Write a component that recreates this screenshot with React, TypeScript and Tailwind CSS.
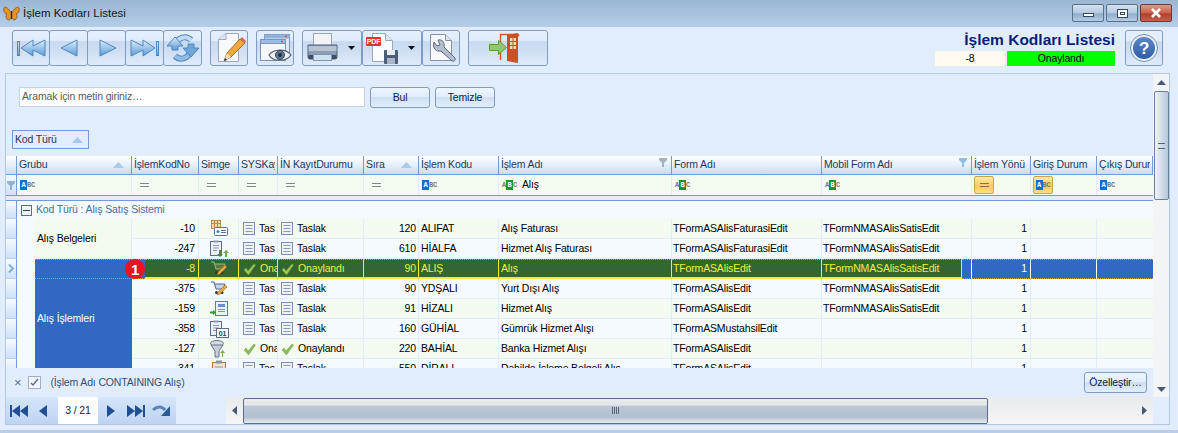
import React from "react";

const COLS = "grid-cols-[11px_18px_97px_67px_40px_39px_86px_55px_80px_173px_150px_150px_59px_66px_56px]";

const toolBtn =
  "relative flex h-[36px] shrink-0 items-center justify-center rounded-[3px] border border-[#7f9cc3] bg-[linear-gradient(180deg,#e4effe_0%,#dfebfc_30%,#c8daf1_31%,#cfdff3_60%,#e0ebfb_100%)]";
const smallBtn =
  "flex h-[21px] items-center justify-center rounded-[3px] border border-[#7f9cc3] bg-[linear-gradient(180deg,#eef5fe_0%,#e2edfc_45%,#cfdff4_50%,#e2edfb_100%)] text-[#10233f]";

const Tri = ({ id }: { id: string }) => (
  <defs>
    <linearGradient id={id} x1="0" y1="0" x2="0" y2="1">
      <stop offset="0" stopColor="#dcedfb" />
      <stop offset="1" stopColor="#5c9ad6" />
    </linearGradient>
  </defs>
);

const NavIcon = ({ kind }: { kind: "first" | "prev" | "next" | "last" }) => {
  const id = "nav-" + kind;
  return (
    <svg width="36" height="34" viewBox="0 0 36 34">
      <Tri id={id} />
      <g fill={`url(#${id})`} stroke="#4f86c0" strokeWidth="1">
        {kind === "first" && (
          <>
            <rect x="4.5" y="10.5" width="2" height="14" />
            <path d="M32 9v16L20 19v6L8 17l12-8v6z" />
          </>
        )}
        {kind === "prev" && <path d="M26 9v16L10 17z" />}
        {kind === "next" && <path d="M11 9v16l16-8z" />}
        {kind === "last" && (
          <>
            <rect x="29.5" y="10.5" width="2" height="14" />
            <path d="M4 9v16l12-6v6l12-8-12-8v6z" />
          </>
        )}
      </g>
    </svg>
  );
};

const RefreshIcon = () => (
  <svg width="36" height="34" viewBox="0 0 36 34">
    <Tri id="rf" />
    <g fill="none" strokeLinecap="butt">
      <path d="M11 13a9 9 0 0 1 15-4" stroke="#4f86bd" strokeWidth="6" />
      <path d="M11 13a9 9 0 0 1 15-4" stroke="#bfdcf3" strokeWidth="4" />
      <path d="M25 21a9 9 0 0 1-15 4" stroke="#4f86bd" strokeWidth="6" />
      <path d="M25 21a9 9 0 0 1-15 4" stroke="#8fbde4" strokeWidth="4" />
    </g>
    <path d="M2 15l8-9 8 9h-5v4H7v-4z" fill="url(#rf)" stroke="#4f86bd" />
    <path d="M34 17l-8 9-8-9h5v-4h6v4z" fill="#6ea6da" stroke="#4f86bd" />
  </svg>
);

const DocPencilIcon = () => (
  <svg width="36" height="34" viewBox="0 0 36 34">
    <path d="M7.5 8.5 15 2.5h12.5v28h-20z" fill="#f7f9fc" stroke="#9aa8ba" />
    <path d="M7.5 8.5h7.5v-6" fill="#dfe6ef" stroke="#9aa8ba" />
    <path d="M13 30l3-8 13-14 5 4-14 14z" fill="#f2a83a" stroke="#7a5a20" strokeWidth=".8" />
    <path d="M13 30l3-8 4 4z" fill="#f0dcb8" />
    <path d="M13 30l1-3 2 2z" fill="#333" />
    <path d="M29 8l5 4 1-2-4-4z" fill="#d9695a" />
  </svg>
);

const ViewIcon = () => (
  <svg width="36" height="34" viewBox="0 0 36 34">
    <rect x="7.5" y="3.5" width="25" height="18" fill="#dfeafa" stroke="#7d93b3" />
    <rect x="7.5" y="3.5" width="25" height="4" fill="#8fb2e0" />
    <rect x="3.5" y="8.5" width="25" height="21" fill="#f4f7fc" stroke="#7d93b3" />
    <rect x="3.5" y="8.5" width="25" height="4" fill="#9cbde6" stroke="#7d93b3" />
    <circle cx="29" cy="5.5" r="1" fill="#d9503f" />
    <circle cx="25" cy="10.5" r="1" fill="#d9503f" />
    <path d="M12 24c4-6 17-7 22 0-5 7-18 7-22 0z" fill="#eef0f2" stroke="#55606e" strokeWidth="1.2" />
    <circle cx="23" cy="24" r="4.5" fill="#5f7894" stroke="#39495c" />
    <circle cx="23" cy="24" r="2" fill="#26303c" />
  </svg>
);

const PrinterIcon = () => (
  <svg width="34" height="34" viewBox="0 0 34 34">
    <rect x="8.5" y="2.5" width="18" height="13" fill="#f2f4f7" stroke="#9aa5b3" />
    <path d="M3 14h29v12a2 2 0 0 1-2 2H5a2 2 0 0 1-2-2z" fill="#8d9db5" stroke="#4d5c74" />
    <rect x="3.5" y="15" width="28" height="5" fill="#b7c2d2" />
    <rect x="3.5" y="24" width="28" height="4" fill="#3f4e66" />
    <rect x="8.5" y="23.5" width="18" height="6" fill="#cfe0f1" stroke="#7f94ad" />
  </svg>
);

const PdfIcon = () => (
  <svg width="34" height="34" viewBox="0 0 34 34">
    <path d="M7.5 2.5h13l7 7v21h-20z" fill="#fbfcfe" stroke="#9aa8ba" />
    <path d="M20.5 2.5v7h7" fill="#dfe6ef" stroke="#9aa8ba" />
    <rect x="1" y="6" width="15" height="9" rx="1" fill="#d9352c" />
    <text x="8.5" y="13.2" textAnchor="middle" fontSize="7" fontWeight="700" fill="#fff" fontFamily="Liberation Sans, sans-serif">PDF</text>
    <rect x="19" y="19" width="14" height="14" rx="1" fill="#4c5d77" />
    <rect x="22" y="19" width="8" height="5" fill="#e6ebf2" />
    <rect x="22" y="27" width="8" height="6" fill="#aab6c6" />
  </svg>
);

const WrenchIcon = () => (
  <svg width="36" height="34" viewBox="0 0 36 34">
    <path d="M7.5 3.5h15l6 6v20h-21z" fill="#f7f9fc" stroke="#8693a6" />
    <path d="M22.5 3.5v6h6" fill="#dfe6ef" stroke="#8693a6" />
    <path d="M11 11l3 4 3-1-2-5c4-1 7 2 6 7l11 11c1 2-1 4-3 3L18 20c-5 1-9-3-7-9z" fill="#b3bfce" stroke="#5d6b7f" />
  </svg>
);

const ExitIcon = () => (
  <svg width="40" height="34" viewBox="0 0 40 34">
    <path d="M12.5 29V3.5h18v2" fill="none" stroke="#d9552c" strokeWidth="1.4" />
    <path d="M19 4l11-2v30l-11-2z" fill="#cf4f24" />
    <g fill="#e9d9b5">
      <rect x="22" y="7" width="2.5" height="3" />
      <rect x="25.5" y="7" width="2.5" height="3" />
      <rect x="22" y="11" width="2.5" height="3" />
      <rect x="25.5" y="11" width="2.5" height="3" />
      <rect x="22" y="15" width="2.5" height="3" />
      <rect x="25.5" y="15" width="2.5" height="3" />
    </g>
    <path d="M1.5 13.5h9v-4l8 7-8 7v-4h-9z" fill="#93c866" stroke="#5f9a3a" />
  </svg>
);

const HelpIcon = () => (
  <svg width="30" height="30" viewBox="0 0 30 30">
    <defs>
      <linearGradient id="hp" x1="0" y1="0" x2="0" y2="1">
        <stop offset="0" stopColor="#5f86c6" />
        <stop offset="1" stopColor="#2c5da8" />
      </linearGradient>
    </defs>
    <circle cx="15" cy="15" r="13.5" fill="#e8eef6" stroke="#7a94b8" />
    <circle cx="15" cy="15" r="11" fill="url(#hp)" />
    <text x="15" y="21" textAnchor="middle" fontSize="17" fontWeight="700" fill="#fff" fontFamily="Liberation Sans, sans-serif">?</text>
  </svg>
);

const Butterfly = () => (
  <svg width="17" height="16" viewBox="0 0 17 16">
    <path d="M8 7C6 2 2 0 1 2c-1 3 1 6 3 6-2 1-1 6 2 6 2 0 2-4 2-7z" fill="#e8902a" stroke="#7c4a14" strokeWidth=".7" />
    <path d="M9 7c2-5 6-7 7-5 1 3-1 6-3 6 2 1 1 6-2 6-2 0-2-4-2-7z" fill="#e8902a" stroke="#7c4a14" strokeWidth=".7" />
    <rect x="8" y="5" width="1" height="8" fill="#3a2a14" />
  </svg>
);

const Caret = () => (
  <svg width="7" height="4" viewBox="0 0 7 4" className="shrink-0">
    <path d="M0 0h7L3.5 4z" fill="#111" />
  </svg>
);

const WinButton = ({ kind }: { kind: "min" | "max" | "close" }) => (
  <div
    className={
      kind === "close"
        ? "flex h-[18px] w-[32px] items-center justify-center rounded-[2px] border border-[#6b3a3a] bg-[linear-gradient(180deg,#dd9a8a_0%,#c9604c_50%,#b33f2c_55%,#c4604a_100%)]"
        : "flex h-[18px] w-[32px] items-center justify-center rounded-[2px] border border-[#5c6f88] bg-[linear-gradient(180deg,#d4e1f0_0%,#b4c9e0_50%,#8fadce_55%,#b4cbe4_100%)]"
    }
  >
    {kind === "min" && <div className="mt-[4px] h-[4px] w-[11px] border border-[#36475e] bg-white" />}
    {kind === "max" && <div className="flex h-[9px] w-[11px] items-center justify-center border border-[#36475e] bg-white"><div className="h-[3px] w-[5px] border border-[#36475e]" /></div>}
    {kind === "close" && (
      <svg width="12" height="10" viewBox="0 0 12 10">
        <path d="M2 1l8 8M10 1L2 9" stroke="#fff" strokeWidth="2.6" />
      </svg>
    )}
  </div>
);

const Sort = () => (
  <svg width="11" height="6" viewBox="0 0 11 6" className="shrink-0">
    <path d="M0 6L5.5 0 11 6z" fill="#a9c8ec" />
  </svg>
);

const Funnel = ({ color = "#a5b4c4" }: { color?: string }) => (
  <svg width="8" height="9" viewBox="0 0 8 9" className="shrink-0">
    <path d="M0 0h8v2L5 5v4H3V5L0 2z" fill={color} />
  </svg>
);

const Eq = () => <div className="ml-[6px] h-[4px] w-[9px] border-y border-[#7f8790]" />;

const Abc = ({ on }: { on: "a" | "b" }) => (
  <span className="flex items-center font-['Liberation_Mono',monospace] text-[7px] font-bold leading-none tracking-normal text-[#777]">
    <span className={on === "a" ? "flex h-[10px] w-[7px] items-center justify-center bg-[#0f6fd1] text-white" : "w-[4px] text-center"}>A</span>
    <span className={on === "b" ? "flex h-[10px] w-[7px] items-center justify-center bg-[#0e9a2a] text-white" : "w-[4px] text-center"}>B</span>
    <span className="w-[4px] text-center">C</span>
  </span>
);

const DocMark = () => (
  <svg width="12" height="13" viewBox="0 0 12 13" className="shrink-0">
    <rect x=".5" y=".5" width="11" height="12" fill="#eef2f9" stroke="#7e8cb2" />
    <path d="M2.5 3.5h7M2.5 6.500h7M2.5 9.500h7" stroke="#8c98bb" />
  </svg>
);

const Check = ({ light }: { light?: boolean }) => (
  <svg width="13" height="12" viewBox="0 0 13 12" className="shrink-0">
    <path d="M1 7l2-2 2 3 6-7 1.500 1-7 10z" fill={light ? "#9ecb50" : "#8dbb58"} stroke={light ? "#6c9a38" : "#7aa24a"} strokeWidth=".5" />
  </svg>
);

const SimgeIcon = ({ n }: { n: number }) => {
  if (n === 0)
    return (
      <svg width="18" height="17" viewBox="0 0 18 17">
        <rect x="1.5" y=".5" width="9" height="8" fill="#f6d9a8" stroke="#c98a3a" />
        <path d="M1.5 3.5h9M4.5.5v8M7.5.5v8" stroke="#c98a3a" />
        <rect x="4.5" y="7.5" width="13" height="8" rx="1" fill="#f6f8fc" stroke="#5b6f96" />
        <circle cx="8" cy="11.5" r="1.5" fill="#5b7fb0" />
        <path d="M11 10.5h5M11 12.5h5" stroke="#5b6f96" />
      </svg>
    );
  if (n === 1 || n === 5)
    return (
      <svg width="20" height="18" viewBox="0 0 20 18">
        <rect x="1.5" y="1.5" width="11" height="14" fill="#eef2f8" stroke="#5c6c8c" />
        <rect x="4.5" y=".5" width="5" height="2" fill="#8c9ab2" />
        <path d="M4 5.5h6M4 8h6M4 10.5h4" stroke="#8895ad" />
        {n === 1 ? (
          <>
            <path d="M10 10v4H8l3 3 3-3h-2v-4z" fill="#4f8a3c" />
            <path d="M16 17v-4h-2l3-3 3 3h-2v4z" fill="#76a94e" />
          </>
        ) : (
          <>
            <rect x="7.5" y="8.5" width="12" height="9" fill="#f6f8fc" stroke="#5c6c8c" />
            <text x="13.5" y="16" textAnchor="middle" fontSize="7" fontWeight="700" fill="#2f3e5c" fontFamily="Liberation Sans, sans-serif">01</text>
          </>
        )}
      </svg>
    );
  if (n === 2 || n === 3)
    return (
      <svg width="17" height="15" viewBox="0 0 17 15">
        <path d="M1 1h3l2 7h7l2-5H5" fill={n === 2 ? "#5a7a3a" : "#c6d4ea"} stroke={n === 2 ? "#9fb27a" : "#52688e"} />
        <circle cx="6.5" cy="11.5" r="1.5" fill="#333" />
        <circle cx="12" cy="11.5" r="1.5" fill="#333" />
        <path d="M7 14l1-3 7-7 2 2-7 7z" fill="#eea73c" stroke="#7a5a20" strokeWidth=".5" />
      </svg>
    );
  if (n === 4)
    return (
      <svg width="18" height="16" viewBox="0 0 18 16">
        <rect x="5.5" y=".5" width="12" height="14" fill="#eaf1fb" stroke="#5c7cae" />
        <rect x="8" y="3" width="7" height="3" fill="#6d8fc2" />
        <path d="M8 8.5h7M8 10.5h7" stroke="#7d95bb" />
        <path d="M0 10.5h3V9l3 2.5L3 14v-1.500H0z" fill="#2f9a2f" />
      </svg>
    );
  if (n === 6)
    return (
      <svg width="19" height="18" viewBox="0 0 19 18">
        <ellipse cx="8" cy="3.5" rx="6.5" ry="3" fill="#d5dae2" stroke="#687487" />
        <path d="M2 5l4 6v6h4v-6l4-6z" fill="#c8ced8" stroke="#687487" />
        <path d="M13 17v-4h-2l2.500-3 2.500 3h-2v4z" fill="#7aae4c" />
      </svg>
    );
  return (
    <svg width="14" height="18" viewBox="0 0 14 18">
      <rect x=".5" y="2.5" width="13" height="15" fill="#f7e3c4" stroke="#c0762a" />
      <rect x="4" y=".5" width="6" height="3" fill="#8895ad" />
      <path d="M3 7h8M3 10h8" stroke="#8895ad" />
    </svg>
  );
};

type Row = {
  no: string;
  ok: boolean;
  sira: string;
  kod: string;
  ad: string;
  form: string;
  mobil: string;
};

const MOBIL = "TFormNMASAlisSatisEdit";
const rows: Row[] = [
  { no: "-10", ok: false, sira: "120", kod: "ALIFAT", ad: "Alış Faturası", form: "TFormASAlisFaturasiEdit", mobil: MOBIL },
  { no: "-247", ok: false, sira: "610", kod: "HİALFA", ad: "Hizmet Alış Faturası", form: "TFormASAlisFaturasiEdit", mobil: MOBIL },
  { no: "-8", ok: true, sira: "90", kod: "ALIŞ", ad: "Alış", form: "TFormASAlisEdit", mobil: MOBIL },
  { no: "-375", ok: false, sira: "90", kod: "YDŞALI", ad: "Yurt Dışı Alış", form: "TFormASAlisEdit", mobil: MOBIL },
  { no: "-159", ok: false, sira: "91", kod: "HİZALI", ad: "Hizmet Alış", form: "TFormASAlisEdit", mobil: MOBIL },
  { no: "-358", ok: false, sira: "160", kod: "GÜHİAL", ad: "Gümrük Hizmet Alışı", form: "TFormASMustahsilEdit", mobil: "" },
  { no: "-127", ok: true, sira: "220", kod: "BAHİAL", ad: "Banka Hizmet Alışı", form: "TFormASAlisEdit", mobil: "" },
  { no: "-341", ok: false, sira: "550", kod: "DİRALI", ad: "Dahilde İşleme Belgeli Alış", form: "TFormASAlisEdit", mobil: "" },
];

const headCell =
  "relative flex items-center gap-1 overflow-hidden whitespace-nowrap border-r border-b border-r-[#6f9bd6] border-b-[#6f9bd6] bg-[linear-gradient(180deg,#ffffff_0%,#e6effc_50%,#c9dcf6_100%)] pl-[2px] pr-[2px] text-[#1e395b]";
const filterCell = "flex items-center overflow-hidden whitespace-nowrap border-r border-r-[#e1edfb] bg-[#f4fbf1] pl-[2px]";
const indicator =
  "flex items-center justify-center border-r border-b border-r-[#6f9bd6] border-b-[#b9cfea] bg-[linear-gradient(180deg,#f6faff_0%,#cfe0f7_100%)]";

const Head = ({ label, sort, funnel }: { label: string; sort?: boolean; funnel?: string }) => (
  <div className={headCell}>
    <span className="flex-1 overflow-hidden">{label}</span>
    {sort && <span className="mr-[4px]"><Sort /></span>}
    {funnel && <span className="mr-[2px] mb-[5px]"><Funnel color={funnel} /></span>}
  </div>
);

const GreenCell = "border-r border-r-[#eded3a] border-t border-t-[#c9a43a] [border-top-style:dotted] border-b-2 border-b-[#eded3a] bg-[#336633] text-[#f0f03c]";
const BlueCell = "border-r border-r-[#ffffff] border-y border-y-[#c9a43a] [border-top-style:dotted] [border-bottom-style:dotted] bg-[#3068c4] text-white";

const DataRow = ({ row, i, group }: { row: Row; i: number; group?: React.ReactNode }) => {
  const sel = i === 2;
  const tint = i === 0 || i === 4 || i === 6 ? "bg-[#f3fbf0]" : "bg-[#f5faff]";
  const base = "flex items-center overflow-hidden whitespace-nowrap";
  const plain = `border-r border-b border-r-[#e1edfb] border-b-[#e1edfb] ${tint}`;
  const cell = `${base} ${sel ? GreenCell : plain}`;
  return (
    <>
      <div className={indicator}>
        {sel && (
          <svg width="6" height="9" viewBox="0 0 6 9">
            <path d="M1 .5l4 4-4 4" fill="none" stroke="#7fa8dc" strokeWidth="1.8" />
          </svg>
        )}
      </div>
      <div className="border-b border-b-[#f5faff] bg-[#f5faff]" />
      {group}
      {sel ? (
        <div className="relative flex">
          <div className={`w-[13px] ${BlueCell} border-r-0`} />
          <div className={`${cell} flex-1 justify-end pr-[3px]`}>{row.no}</div>
          <div className="absolute left-[-7px] top-0 z-10 flex h-[20px] w-[20px] items-center justify-center rounded-full bg-[#ee1122] text-[15px] font-bold leading-none text-white">1</div>
        </div>
      ) : (
        <div className={`${cell} justify-end pr-[3px]`}>{row.no}</div>
      )}
      <div className={`${cell} justify-center`}><SimgeIcon n={i} /></div>
      <div className={`${cell} gap-[4px] pl-[4px]`}>
        {row.ok ? <Check light={sel} /> : <DocMark />}
        <span>{row.ok ? "Ona" : "Tas"}</span>
      </div>
      <div className={`${cell} gap-[4px] pl-[3px]`}>
        {row.ok ? <Check light={sel} /> : <DocMark />}
        <span>{row.ok ? "Onaylandı" : "Taslak"}</span>
      </div>
      <div className={`${cell} justify-end pr-[2px]`}>{row.sira}</div>
      <div className={`${cell} pl-[2px]`}>{row.kod}</div>
      <div className={`${cell} pl-[2px]`}>{row.ad}</div>
      <div className={`${cell} pl-[1px]`}>{row.form}</div>
      {sel ? (
        <div className="flex">
          <div className={`${cell} w-[140px] pl-[1px]`}>{row.mobil}</div>
          <div className={`flex-1 ${BlueCell}`} />
        </div>
      ) : (
        <div className={`${cell} pl-[1px]`}>{row.mobil}</div>
      )}
      <div className={`${base} justify-end pr-[3px] ${sel ? BlueCell : plain}`}>1</div>
      <div className={`${base} ${sel ? BlueCell : plain}`} />
      <div className={`${base} ${sel ? BlueCell : plain} border-r-0`} />
    </>
  );
};

const DataGrid = () => (
  <div className={`grid h-[212px] overflow-hidden text-black ${COLS} grid-rows-[19px_20px_6px_18px_repeat(8,20px)]`}>
    <div className={headCell} />
    <div className={`${headCell} col-span-2 pl-[1px]`}>
      <span className="flex-1">Grubu</span>
      <span className="mr-[5px]"><Sort /></span>
    </div>
    <Head label="İşlemKodNo" />
    <Head label="Simge" />
    <Head label="SYSKay" />
    <Head label="İN KayıtDurumu" />
    <Head label="Sıra" sort />
    <Head label="İşlem Kodu" />
    <Head label="İşlem Adı" funnel="#a5b4c4" />
    <Head label="Form Adı" />
    <Head label="Mobil Form Adı" funnel="#8fc0e8" />
    <Head label="İşlem Yönü" />
    <Head label="Giriş Durum" />
    <Head label="Çıkış Durum" />

    <div className={`${indicator} border-b-0`}><Funnel color="#8fb4dc" /></div>
    <div className={`${filterCell} col-span-2 pl-[3px]`}><Abc on="a" /></div>
    <div className={filterCell}><Eq /></div>
    <div className={filterCell}><Eq /></div>
    <div className={filterCell}><Eq /></div>
    <div className={filterCell}><Eq /></div>
    <div className={filterCell}><Eq /></div>
    <div className={`${filterCell} pl-[3px]`}><Abc on="a" /></div>
    <div className={`${filterCell} gap-[5px] pl-[3px]`}><Abc on="b" /><span>Alış</span></div>
    <div className={`${filterCell} pl-[3px]`}><Abc on="b" /></div>
    <div className={`${filterCell} pl-[3px]`}><Abc on="b" /></div>
    <div className={filterCell}>
      <div className="flex h-[18px] w-[20px] items-center justify-center rounded-[2px] border border-[#c9a24a] bg-[linear-gradient(180deg,#fdeaa8_0%,#fbc95a_60%,#fde08e_100%)]">
        <div className="h-[4px] w-[9px] border-y border-[#7f7350]" />
      </div>
    </div>
    <div className={filterCell}>
      <div className="flex h-[18px] w-[20px] items-center justify-center rounded-[2px] border border-[#c9a24a] bg-[linear-gradient(180deg,#fdeaa8_0%,#fbc95a_60%,#fde08e_100%)]"><Abc on="a" /></div>
    </div>
    <div className={`${filterCell} border-r-0 pl-[3px]`}><Abc on="a" /></div>

    <div className="col-span-full border-y border-y-[#6f9bd6] bg-[#e1edfd]" />

    <div className={indicator} />
    <div className="col-span-14 flex items-center gap-[4px] bg-[#f5faff] pl-[4px] text-[#3d70a8]">
      <div className="flex h-[11px] w-[11px] items-center justify-center border border-[#5b6f8c] bg-[#eef3fa]"><div className="h-[1px] w-[7px] bg-[#33415a]" /></div>
      <span>Kod Türü : Alış Satış Sistemi</span>
    </div>

    {rows.map((row, i) => (
      <DataRow
        key={row.no}
        row={row}
        i={i}
        group={
          i === 0 ? (
            <div className="row-span-2 flex items-center border-r border-b border-[#e1edfb] bg-[#f3fbf0] pl-[2px]">Alış Belgeleri</div>
          ) : i === 2 ? (
            <div className="relative row-span-6 flex items-center bg-[#3068c4] pl-[2px] text-white">
              <div className="absolute inset-x-0 top-0 h-[20px] border-y border-dotted border-y-[#c9a43a]" />
              Alış İşlemleri
            </div>
          ) : undefined
        }
      />
    ))}
  </div>
);

const ScrollArrow = ({ dir }: { dir: "up" | "down" | "left" | "right" }) => (
  <svg width="9" height="9" viewBox="0 0 9 9" className="shrink-0">
    {dir === "up" && <path d="M0 7l4.500-5L9 7z" fill="#46587a" />}
    {dir === "down" && <path d="M0 2l4.500 5L9 2z" fill="#46587a" />}
    {dir === "left" && <path d="M7 0L2 4.500 7 9z" fill="#46587a" />}
    {dir === "right" && <path d="M2 0l5 4.500L2 9z" fill="#46587a" />}
  </svg>
);

const PagerIcon = ({ kind }: { kind: string }) => (
  <svg width="20" height="14" viewBox="0 0 20 14">
    <g fill="#1f4f92">
      {kind === "first" && <path d="M1 1h2v12H1zM3 7l8-6v12zM11 7l8-6v12z" />}
      {kind === "prev" && <path d="M14 1v12L6 7z" />}
      {kind === "next" && <path d="M6 1v12l8-6z" />}
      {kind === "last" && <path d="M1 1l8 6-8 6zM9 1l8 6-8 6zM17 1h2v12h-2z" />}
    </g>
    {kind === "redo" && (
      <>
        <path d="M1 6c4-4 9-4 12 0" fill="none" stroke="#5d83b4" strokeWidth="3" />
        <path d="M18 2v10h-9z" fill="#2b5a96" />
      </>
    )}
  </svg>
);

export default function App() {
  return (
    <div className="flex h-[433px] w-[1178px] flex-col overflow-hidden bg-[#e1edfd] font-['Liberation_Sans',sans-serif] text-[10.5px] tracking-[-0.15px] text-black">
      {/* title bar */}
      <div className="flex h-[27px] shrink-0 items-center bg-[linear-gradient(180deg,#9bb6d4_0%,#b4cde8_100%)] pl-[3px] pr-[6px]">
        <Butterfly />
        <span className="ml-[3px] text-[11.5px] tracking-normal text-[#101820]">İşlem Kodları Listesi</span>
        <div className="ml-auto mb-[1px] flex gap-[2px]">
          <WinButton kind="min" />
          <WinButton kind="max" />
          <WinButton kind="close" />
        </div>
      </div>

      {/* toolbar */}
      <div className="flex h-[46px] shrink-0 items-start pl-[12px] pr-[15px] pt-[3px]">
        <div className={`${toolBtn} w-[38px]`}><NavIcon kind="first" /></div>
        <div className={`${toolBtn} -ml-px w-[39px]`}><NavIcon kind="prev" /></div>
        <div className={`${toolBtn} -ml-px w-[39px]`}><NavIcon kind="next" /></div>
        <div className={`${toolBtn} -ml-px w-[39px]`}><NavIcon kind="last" /></div>
        <div className={`${toolBtn} -ml-px w-[39px]`}><RefreshIcon /></div>
        <div className={`${toolBtn} ml-[8px] w-[38px]`}><DocPencilIcon /></div>
        <div className={`${toolBtn} ml-[8px] w-[38px]`}><ViewIcon /></div>
        <div className={`${toolBtn} ml-[8px] w-[60px] justify-start gap-[4px] pl-[2px]`}><PrinterIcon /><span className="ml-[5px]"><Caret /></span></div>
        <div className={`${toolBtn} w-[60px] justify-start gap-[4px] pl-[2px]`}><PdfIcon /><span className="ml-[5px]"><Caret /></span></div>
        <div className={`${toolBtn} w-[38px]`}><WrenchIcon /></div>
        <div className={`${toolBtn} ml-[8px] w-[80px]`}><ExitIcon /></div>

        <div className="ml-auto flex flex-col items-end">
          <div className="h-[20px] text-[15.5px] font-bold leading-[20px] tracking-normal text-[#0a1f78]">İşlem Kodları Listesi</div>
          <div className="mt-[1px] flex gap-[2px]">
            <div className="flex h-[15px] w-[70px] items-center justify-center bg-[#fffaf0]">-8</div>
            <div className="flex h-[15px] w-[108px] items-center justify-center bg-[#00ff00]">Onaylandı</div>
          </div>
        </div>
        <div className={`${toolBtn} ml-[10px] w-[38px]`}><HelpIcon /></div>
      </div>

      {/* main panel */}
      <div className="ml-[5px] mr-[8px] flex h-[352px] shrink-0 flex-col border border-[#b3c9e3]">
        <div className="flex h-[323px]">
          <div className="flex w-[1147px] flex-col">
            <div className="h-[82px] pl-[6px]">
              <div className="flex gap-[5px] pl-[7px] pt-[13px]">
                <div className="flex h-[20px] w-[346px] items-center border border-[#c3d3e6] bg-white pl-[2px] text-[#5a5a5a]">Aramak için metin giriniz…</div>
                <div className={`${smallBtn} w-[60px]`}>Bul</div>
                <div className={`${smallBtn} w-[60px]`}>Temizle</div>
              </div>
              <div className="mt-[22px] flex h-[19px] w-[77px] items-center justify-between border border-[#6f9bd6] bg-[#e1edfd] pl-[2px] pr-[5px] text-[#1e395b]">
                Kod Türü <Sort />
              </div>
            </div>
            <DataGrid />
            <div className="flex h-[29px] items-center bg-[#e1edfd] pl-[8px] pr-[6px]">
              <span className="text-[13px] leading-none text-[#5b7093]">×</span>
              <div className="ml-[7px] flex h-[13px] w-[13px] items-center justify-center border border-[#9fb0c6] bg-[#f1f5fb]">
                <svg width="9" height="9" viewBox="0 0 9 9"><path d="M1 5l2 2 5-6" fill="none" stroke="#5f6f88" strokeWidth="1.4" /></svg>
              </div>
              <span className="ml-[9px] text-[#33507c]">(İşlem Adı CONTAINING Alış)</span>
              <div className={`${smallBtn} ml-auto w-[63px]`}>Özelleştir…</div>
            </div>
          </div>
          <div className="flex w-[16px] flex-col items-center bg-[#f3f4f6]">
            <div className="flex h-[17px] items-center"><ScrollArrow dir="up" /></div>
            <div className="flex h-[109px] w-[15px] items-center justify-center rounded-[2px] border border-[#6b7f9e] bg-[linear-gradient(90deg,#eef3fa_0%,#ccd8e8_60%,#b7c6da_100%)]">
              <div className="h-[6px] w-[7px] border-y border-[#56657c] bg-[linear-gradient(180deg,transparent_40%,#56657c_40%,#56657c_60%,transparent_60%)]" />
            </div>
            <div className="mt-auto flex h-[16px] items-center"><ScrollArrow dir="down" /></div>
          </div>
        </div>

        <div className="flex h-[28px]">
          <div className="flex w-[220px] items-center">
            <div className="flex h-[27px] w-[170px] items-center bg-[linear-gradient(180deg,#d6e5f9_0%,#bcd4f2_100%)] pl-[3px]">
              <PagerIcon kind="first" />
              <span className="ml-[4px]"><PagerIcon kind="prev" /></span>
              <div className="ml-[5px] flex h-[27px] w-[40px] shrink-0 items-center justify-center bg-white text-[#10233f]">3 / 21</div>
              <span className="ml-[3px]"><PagerIcon kind="next" /></span>
              <span className="ml-[5px]"><PagerIcon kind="last" /></span>
              <span className="ml-[6px]"><PagerIcon kind="redo" /></span>
            </div>
          </div>
          <div className="flex h-[27px] w-[927px] items-center bg-[linear-gradient(180deg,#e9eaec_0%,#f6f6f7_100%)]">
            <div className="flex w-[17px] justify-center"><ScrollArrow dir="left" /></div>
            <div className="flex h-[26px] w-[745px] items-center justify-center rounded-[2px] border border-[#5a6d8f] bg-[linear-gradient(180deg,#e9e9ea_0%,#e4e6e9_25%,#bcc8d8_30%,#b2bfd0_75%,#e9edf3_100%)]">
              <div className="h-[7px] w-[8px] bg-[repeating-linear-gradient(90deg,#56657c_0,#56657c_1px,transparent_1px,transparent_2px)]" />
            </div>
            <div className="ml-auto flex w-[17px] justify-center"><ScrollArrow dir="right" /></div>
          </div>
        </div>
      </div>

      <div className="mt-auto h-[3px] bg-[#b8cfe8]" />
    </div>
  );
}
